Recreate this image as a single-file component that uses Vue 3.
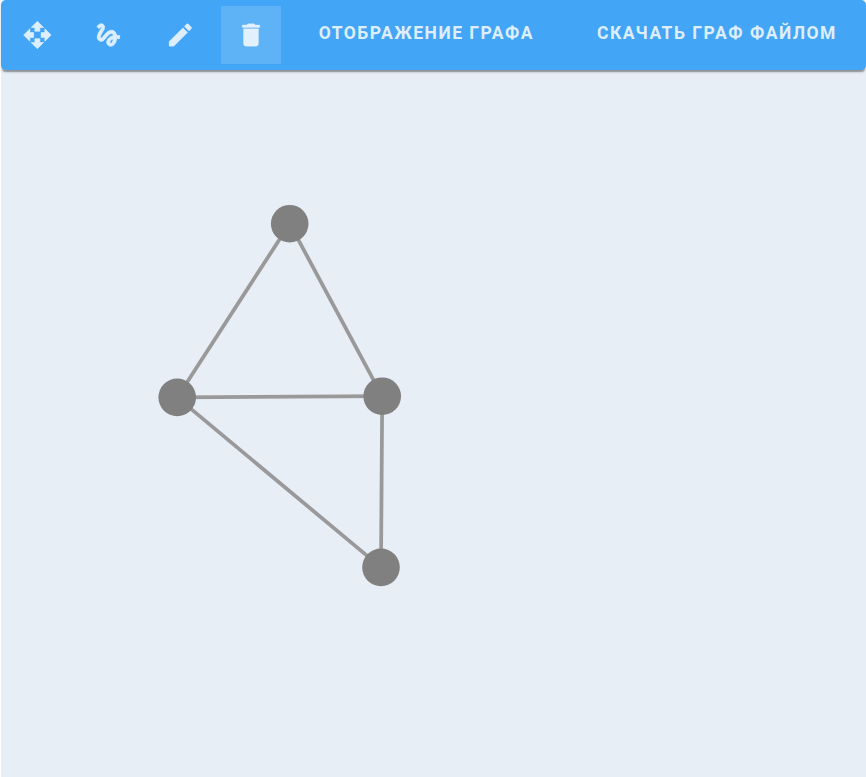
<script setup>
const tools = [
  { name: 'move', weight: 0.5, d: 'M10 9h4V6h3l-5-5-5 5h3v3zm-1 1H6V7l-5 5 5 5v-3h3v-4zm14 2l-5-5v3h-3v4h3v3l5-5zm-9 3h-4v3H7l5 5 5-5h-3v-3z' },
  { name: 'gesture', weight: 0.65, d: 'M4.59 6.89c.7-.71 1.4-1.35 1.71-1.22.5.2 0 1.03-.3 1.52-.25.42-2.86 3.89-2.86 6.31 0 1.28.48 2.34 1.34 2.98.75.56 1.74.73 2.64.46 1.07-.31 1.95-1.4 3.06-2.77 1.21-1.49 2.83-3.44 4.08-3.44 1.63 0 1.65 1.01 1.76 1.79-3.78.64-5.38 3.67-5.38 5.37 0 1.7 1.44 3.09 3.21 3.09 1.63 0 4.29-1.33 4.69-6.1H21v-2.5h-2.47c-.15-1.65-1.09-4.2-4.03-4.2-2.25 0-4.18 1.91-4.94 2.84-.58.73-2.06 2.48-2.29 2.72-.25.3-.68.84-1.11.84-.45 0-.72-.83-.36-1.92.35-1.09 1.4-2.86 1.85-3.52.78-1.14 1.3-1.92 1.3-3.28C8.95 3.69 7.31 3 6.44 3 5.12 3 3.97 4 3.72 4.25c-.36.36-.66.66-.88.93l1.75 1.71zm9.29 11.66c-.31 0-.74-.26-.74-.72 0-.6.73-2.2 2.87-2.76-.3 2.69-1.43 3.48-2.13 3.48z' },
  { name: 'edit', weight: 0.25, d: 'M3 17.25V21h3.75L17.81 9.94l-3.75-3.75L3 17.25zM20.71 7.04c.39-.39.39-1.02 0-1.41l-2.34-2.34c-.39-.39-1.02-.39-1.41 0l-1.83 1.83 3.75 3.75 1.83-1.83z' },
  { name: 'delete', weight: 0.25, active: true, d: 'M6 19c0 1.1.9 2 2 2h8c1.1 0 2-.9 2-2V7H6v12zM19 4h-3.5l-1-1h-5l-1 1H5v2h14V4z' }
]

const nodes = [
  { x: 288.7, y: 153.7 },
  { x: 176.2, y: 327.4 },
  { x: 381.2, y: 326.2 },
  { x: 380, y: 497.4 }
]
const edges = [[0, 1], [0, 2], [1, 2], [1, 3], [2, 3]]
</script>

<template>
  <div class="page">
    <header class="toolbar">
      <div class="tools">
        <button
          v-for="tool in tools"
          :key="tool.name"
          class="tool"
          :class="{ active: tool.active }"
        >
          <svg viewBox="0 0 24 24"><path :d="tool.d" :stroke-width="tool.weight" /></svg>
        </button>
      </div>
      <button class="action">Отображение графа</button>
      <button class="action download">Скачать граф файлом</button>
    </header>
    <main class="canvas">
      <svg width="865" height="707" viewBox="0 0 865 707">
        <line
          v-for="([a, b], i) in edges"
          :key="'e' + i"
          class="edge"
          :x1="nodes[a].x"
          :y1="nodes[a].y"
          :x2="nodes[b].x"
          :y2="nodes[b].y"
        />
        <circle v-for="(n, i) in nodes" :key="'n' + i" class="node" :cx="n.x" :cy="n.y" r="18.8" />
      </svg>
    </main>
  </div>
</template>

<style>
body {
  background: #fff;
  overflow: hidden;
}
</style>

<style scoped>
.page {
  box-sizing: border-box;
  height: 777px;
  padding-left: 1px;
  display: flex;
  flex-direction: column;
  font-family: Roboto, "Liberation Sans", sans-serif;
}
.toolbar {
  box-sizing: border-box;
  position: relative;
  flex: none;
  display: flex;
  align-items: center;
  height: 70px;
  padding-left: 6px;
  border-radius: 5px;
  background: #42a5f5;
  box-shadow: 0 2.5px 1.25px -1.25px rgba(0, 0, 0, 0.2), 0 1.25px 1.25px rgba(0, 0, 0, 0.14), 0 1.25px 3.75px rgba(0, 0, 0, 0.12);
}
.tools {
  display: flex;
  gap: 11.25px;
}
button {
  margin: 0;
  border: 0;
  background: none;
  color: #fff;
  font-family: inherit;
}
.tool {
  width: 60px;
  height: 58px;
  padding: 0;
  display: flex;
  align-items: center;
  justify-content: center;
}
.tool.active {
  background: rgba(255, 255, 255, 0.15);
}
.tool svg {
  width: 30px;
  height: 30px;
  fill: currentColor;
  stroke: currentColor;
  opacity: 0.82;
}
.tool path {
  transform: translateX(0.3px);
}
.tool.active path {
  transform: none;
}
.action {
  padding: 0 0 5px;
  margin-left: 38px;
  font-size: 17.5px;
  line-height: 22px;
  font-weight: 700;
  letter-spacing: 1.47px;
  opacity: 0.82;
  text-transform: uppercase;
  white-space: nowrap;
}
.download {
  margin-left: 63px;
  letter-spacing: 1.5px;
}
.canvas {
  flex: 1;
  min-height: 0;
  background: #e7eef6;
}
.canvas svg {
  display: block;
}
.edge {
  stroke: #999;
  stroke-width: 3.75;
}
.node {
  fill: #808080;
}
</style>
